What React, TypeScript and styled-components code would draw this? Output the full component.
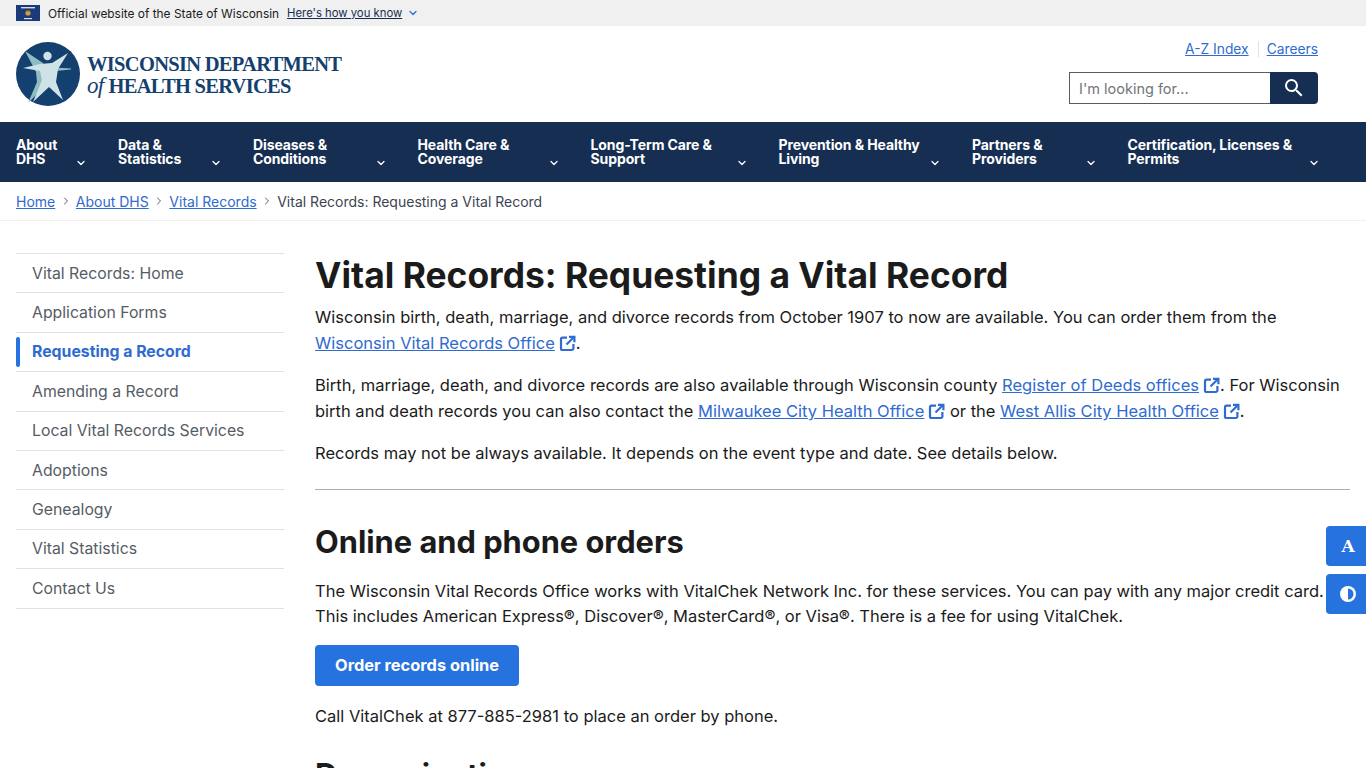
import React from 'react';
import styled, { createGlobalStyle } from 'styled-components';
import { ChevronDown, ChevronRight } from 'lucide-react';
import { MdSearch } from 'react-icons/md';

const GlobalStyle = createGlobalStyle`
  html, body {
    margin: 0;
    padding: 0;
    background: #fff;
    overflow-x: hidden;
  }
  body {
    font-family: Inter, "Liberation Sans", Arial, sans-serif;
    color: #1b1b1b;
  }
  a { text-decoration: none; }
  * { box-sizing: border-box; }
`;

const GovBanner = styled.div`
  height: 26px;
  background: #f0f0f0;
  display: flex;
  align-items: center;
  padding-left: 16px;
  font-size: 11.9px;
  color: #1b1b1b;
`;

const Flag = styled.svg`
  width: 24px;
  height: 16px;
  margin-right: 8px;
`;

const GovLink = styled.a`
  margin-left: 8px;
  color: #162e51;
  text-decoration: underline;
  display: inline-flex;
  align-items: center;
  gap: 5px;
  font-size: 11.3px;

  svg { color: #2672de; }
`;

const Masthead = styled.header`
  height: 96px;
  display: flex;
  justify-content: space-between;
  padding: 0 48px 0 16px;
`;

const Logo = styled.a`
  display: flex;
  align-items: center;
  gap: 7px;
  height: 96px;
  padding-bottom: 1px;
`;

const LogoText = styled.div`
  font-family: "Liberation Serif", "Times New Roman", serif;
  font-weight: 700;
  color: #14406f;
  font-size: 20.5px;
  line-height: 22px;
  letter-spacing: -0.7px;
  white-space: nowrap;
  margin-top: 3px;
  em { font-weight: 400; margin-right: 5px; font-size: 23px; }
`;

const HeaderTools = styled.div`
  display: flex;
  flex-direction: column;
  align-items: flex-end;
  padding-top: 14px;
`;

const TopLinks = styled.div`
  display: flex;
  align-items: center;
  font-size: 13.8px;
  height: 18px;
  margin-bottom: 14px;
`;

const TopLink = styled.a`
  color: #2f6bd0;
  text-decoration: underline;
  & + & {
    margin-left: 9px;
    padding-left: 8px;
    border-left: 1px solid #dfe1e2;
  }
`;

const SearchBox = styled.form`
  display: flex;
  width: 249px;
  height: 32px;
  margin: 0;
`;

const SearchInput = styled.input`
  flex: 1;
  min-width: 0;
  border: 1px solid #565c65;
  border-right: none;
  padding: 0 9px;
  font: inherit;
  font-size: 14.5px;
  outline: none;
  &::placeholder { color: #71767a; opacity: 1; }
`;

const SearchButton = styled.button`
  width: 48px;
  background: #162e51;
  border: none;
  border-radius: 0 4px 4px 0;
  color: #fff;
  display: flex;
  align-items: center;
  justify-content: center;
  padding: 0;
`;

const NavBar = styled.nav`
  height: 60px;
  background: #162e51;
  display: flex;
  align-items: center;
  padding-left: 16px;
`;

const NavItem = styled.a<{ $w: number }>`
  width: ${p => p.$w}px;
  flex: none;
  display: flex;
  justify-content: space-between;
  align-items: flex-end;
  color: #fff;
  font-size: 14px;
  font-weight: 700;
  line-height: 14px;
  padding-right: 31px;
  letter-spacing: -0.1px;
  svg { margin-bottom: -3px; flex: none; }
`;

const Crumbs = styled.div`
  height: 39px;
  border-bottom: 1px solid #f0f0f0;
  display: flex;
  align-items: center;
  padding-left: 16px;
  font-size: 14px;
  color: #3d4551;
  svg { margin: 0 4.3px; color: #565c65; }
`;

const CrumbLink = styled.a`
  color: #2f6bd0;
  text-decoration: underline;
`;

const Layout = styled.div`
  display: grid;
  grid-template-columns: 268px 1fr;
  column-gap: 31px;
  padding: 32px 16px 0;
`;

const SideNav = styled.ul`
  list-style: none;
  margin: 0;
  padding: 0;
  border-top: 1px solid #dfe1e2;
  align-self: start;
`;

const SideItem = styled.li<{ $active?: boolean }>`
  position: relative;
  height: 39.4px;
  border-bottom: 1px solid #dfe1e2;
  padding-left: 16px;
  display: flex;
  align-items: center;
  font-size: 15.8px;
  color: ${p => (p.$active ? '#2f6bd0' : '#565c65')};
  font-weight: ${p => (p.$active ? 700 : 400)};

  ${p => p.$active && `
    &::before {
      content: '';
      position: absolute;
      left: 0;
      top: 4px;
      bottom: 4px;
      width: 4px;
      border-radius: 4px;
      background: #2672de;
    }
  `}
`;

const Main = styled.main`
  min-width: 0;
`;

const Title = styled.h1`
  margin: 1px 0 6px;
  font-size: 35.4px;
  line-height: 44px;
  font-weight: 700;
  color: #1b1b1b;
`;

const Para = styled.p<{ $lineHeight?: number; $after?: number }>`
  margin: 0 0 ${p => p.$after ?? 16}px;
  font-size: 16.5px;
  line-height: ${p => p.$lineHeight ?? 26}px;
  color: #1b1b1b;
`;

const ExtLink = styled.a`
  color: #2f6bd0;
  text-decoration: underline;
  svg {
    display: inline-block;
    vertical-align: -3px;
    margin-left: 4px;
  }
`;

const Rule = styled.hr`
  border: none;
  border-top: 1px solid #a9aeb1;
  margin: 23px 0 28px;
`;

const Heading = styled.h2`
  margin: 0 0 13px;
  font-size: 30.8px;
  line-height: 48px;
  font-weight: 700;
  color: #1b1b1b;
`;

const ActionButton = styled.a`
  display: inline-block;
  background: #2672de;
  color: #fff;
  font-size: 16.4px;
  font-weight: 700;
  height: 41px;
  line-height: 41px;
  padding: 0 20px;
  border-radius: 4px;
  margin-bottom: 17px;
`;

const SideTools = styled.div`
  position: fixed;
  right: 0;
  top: 526px;
  display: flex;
  flex-direction: column;
  gap: 8px;
`;

const ToolButton = styled.button`
  width: 40px;
  height: 40px;
  border: none;
  padding: 0 0 0 4px;
  border-radius: 4px 0 0 4px;
  background: #2672de;
  color: #fff;
  display: flex;
  align-items: center;
  justify-content: center;
  font-family: "DejaVu Serif", "Liberation Serif", serif;
  font-weight: 700;
  font-size: 17px;
`;

const navItems = [
  { l1: 'About', l2: 'DHS', w: 102 },
  { l1: 'Data &', l2: 'Statistics', w: 135 },
  { l1: 'Diseases &', l2: 'Conditions', w: 164.5 },
  { l1: 'Health Care &', l2: 'Coverage', w: 173 },
  { l1: 'Long-Term Care &', l2: 'Support', w: 188 },
  { l1: 'Prevention & Healthy', l2: 'Living', w: 193.5 },
  { l1: 'Partners &', l2: 'Providers', w: 155.5 },
  { l1: 'Certification, Licenses &', l2: 'Permits', w: 223 },
];

const sideItems = [
  'Vital Records: Home',
  'Application Forms',
  'Requesting a Record',
  'Amending a Record',
  'Local Vital Records Services',
  'Adoptions',
  'Genealogy',
  'Vital Statistics',
  'Contact Us',
];

const ExternalIcon = () => (
  <svg width="17" height="17" viewBox="0 0 17 17" fill="none" stroke="currentColor" strokeWidth="2.2">
    <path d="M8 2.6H3.6a1.6 1.6 0 0 0-1.6 1.6v9.2a1.6 1.6 0 0 0 1.6 1.6h9.2a1.6 1.6 0 0 0 1.6-1.6V9" />
    <path d="M7.5 9.5 L15 2" />
    <path d="M10 1.8 H15.4 V7.2" />
  </svg>
);

const External: React.FC<{ children: React.ReactNode }> = ({ children }) => (
  <ExtLink href="#">
    {children}
    <ExternalIcon />
  </ExtLink>
);

const LogoMark = () => (
  <svg width="64" height="64" viewBox="0 0 64 64">
    <circle cx="32" cy="32" r="32" fill="#14406f" />
    <path d="M9 9 L27 21 L31 34 L27 46 L12 61 L21 40 L20 30 Z" fill="#8fbcc4" />
    <path d="M30 25 L55 26.5 L55 27.5 L30 30 Z" fill="#8fbcc4" />
    <path
      d="M7 26 L24 22 L36 21 L52 11 L42 27 L40 40 L47 58 L33 45 L17 60 L26 38 L24 29 Z"
      fill="#cfe3e6"
    />
    <circle cx="31.5" cy="14" r="4.2" fill="#cfe3e6" />
  </svg>
);

const App: React.FC = () => (
  <>
    <GlobalStyle />
    <GovBanner>
      <Flag viewBox="0 0 24 16">
        <rect width="24" height="16" fill="#1b3a7a" />
        <rect x="5" y="2" width="14" height="1.4" fill="#d8dbe6" />
        <circle cx="12" cy="8" r="2.6" fill="#c9a23a" />
        <rect x="10" y="5" width="4" height="1.4" fill="#7a5a2a" />
        <rect x="8" y="13" width="8" height="1.2" fill="#d8dbe6" />
      </Flag>
      Official website of the State of Wisconsin
      <GovLink href="#">
        Here's how you know
        <ChevronDown size={12} strokeWidth={2.5} />
      </GovLink>
    </GovBanner>
    <Masthead>
      <Logo href="#">
        <LogoMark />
        <LogoText>
          WISCONSIN DEPARTMENT
          <br />
          <em>of</em>HEALTH SERVICES
        </LogoText>
      </Logo>
      <HeaderTools>
        <TopLinks>
          <TopLink href="#">A-Z Index</TopLink>
          <TopLink href="#">Careers</TopLink>
        </TopLinks>
        <SearchBox>
          <SearchInput placeholder="I'm looking for..." />
          <SearchButton type="button" aria-label="Search">
            <MdSearch size={24} />
          </SearchButton>
        </SearchBox>
      </HeaderTools>
    </Masthead>
    <NavBar>
      {navItems.map(item => (
        <NavItem key={item.l1} href="#" $w={item.w}>
          <span>
            {item.l1}
            <br />
            {item.l2}
          </span>
          <ChevronDown size={12} strokeWidth={2.5} />
        </NavItem>
      ))}
    </NavBar>
    <Crumbs>
      <CrumbLink href="#">Home</CrumbLink>
      <ChevronRight size={12} />
      <CrumbLink href="#">About DHS</CrumbLink>
      <ChevronRight size={12} />
      <CrumbLink href="#">Vital Records</CrumbLink>
      <ChevronRight size={12} />
      Vital Records: Requesting a Vital Record
    </Crumbs>
    <Layout>
      <SideNav>
        {sideItems.map(item => (
          <SideItem key={item} $active={item === 'Requesting a Record'}>
            {item}
          </SideItem>
        ))}
      </SideNav>
      <Main>
        <Title>Vital Records: Requesting a Vital Record</Title>
        <Para>
          Wisconsin birth, death, marriage, and divorce records from October 1907 to now are available. You can order them from the{' '}
          <External>Wisconsin Vital Records Office</External>.
        </Para>
        <Para>
          Birth, marriage, death, and divorce records are also available through Wisconsin county{' '}
          <External>Register of Deeds offices</External>. For Wisconsin birth and death records you can also contact the{' '}
          <External>Milwaukee City Health Office</External> or the <External>West Allis City Health Office</External>.
        </Para>
        <Para>Records may not be always available. It depends on the event type and date. See details below.</Para>
        <Rule />
        <Heading>Online and phone orders</Heading>
        <Para $lineHeight={25}>
          The Wisconsin Vital Records Office works with VitalChek Network Inc. for these services. You can pay with any major credit card. This includes American Express®, Discover®, MasterCard®, or Visa®. There is a fee for using VitalChek.
        </Para>
        <ActionButton href="#">Order records online</ActionButton>
        <Para $after={22}>Call VitalChek at 877-885-2981 to place an order by phone.</Para>
        <Heading>Denomination</Heading>
      </Main>
    </Layout>
    <SideTools>
      <ToolButton aria-label="Text size">A</ToolButton>
      <ToolButton aria-label="Contrast">
        <svg width="16" height="16" viewBox="0 0 16 16">
          <circle cx="8" cy="8" r="8" fill="#fff" />
          <path d="M8 2.5 A5.5 5.5 0 0 1 8 13.5 Z" fill="#2672de" />
        </svg>
      </ToolButton>
    </SideTools>
  </>
);

export default App;
